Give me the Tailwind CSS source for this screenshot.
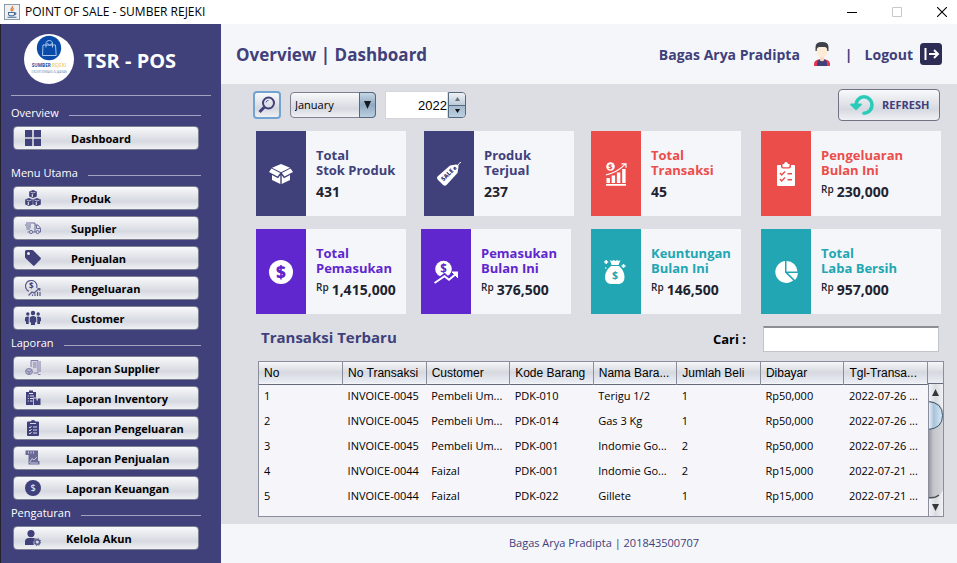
<!DOCTYPE html>
<html lang="id">
<head>
<meta charset="utf-8">
<meta name="viewport" content="width=device-width, initial-scale=1">
<title>POINT OF SALE - SUMBER REJEKI</title>
<script src="https://cdn.jsdelivr.net/npm/@tailwindcss/browser@4"></script>
</head>
<body class="flex min-h-screen flex-col bg-white font-['Open_Sans','Noto_Sans',sans-serif] text-xs text-black">

<!-- Window title bar -->
<div class="flex h-6 items-center bg-white pr-2.5 pl-1">
  <svg class="size-4" viewBox="0 0 16 16" aria-hidden="true">
    <rect x=".5" y=".5" width="15" height="15" fill="#eef1f4" stroke="#8d9aa8"/>
    <path d="M8.500 2c1 1.500-2 2.300-1.500 3.800.2.700.8 1 .8 1.700M10 4.500C8.500 5 8.300 6 9 7" fill="none" stroke="#e0752b" stroke-width="1.200"/>
    <path d="M4.500 8.500h6v1.500c0 1-.8 1.800-1.800 1.800H6.300c-1 0-1.800-.8-1.800-1.800zM10.500 9c2-.4 1.800 1.500-.2 1.700M3.500 13.300h9" fill="none" stroke="#4a6f96" stroke-width="1.100"/>
  </svg>
  <span class="ml-[5px] flex-1 text-xs leading-5">POINT OF SALE - SUMBER REJEKI</span>
  <div class="flex gap-[35px]">
    <button type="button" aria-label="Minimize" class="py-1.5"><svg class="size-2.5" viewBox="0 0 10 10"><path d="M0 5.500h10" stroke="#000"/></svg></button>
    <button type="button" aria-label="Maximize" disabled class="py-1.5"><svg class="size-2.5" viewBox="0 0 10 10"><path d="M.5.5h9v9h-9z" fill="none" stroke="#c8c8c8"/></svg></button>
    <button type="button" aria-label="Close" class="py-1.5"><svg class="size-2.5" viewBox="0 0 10 10"><path d="M0 0l10 10M10 0L0 10" stroke="#000" stroke-width="1.100"/></svg></button>
  </div>
</div>

<div class="flex flex-1">
  <!-- Sidebar -->
  <nav class="w-[221px] shrink-0 border-l border-[#26232e] bg-[#40407a] pt-2.5 text-white">
    <div class="flex items-center pl-[23px]">
      <svg class="size-[50px]" viewBox="0 0 50 50" aria-hidden="true">
        <circle cx="25" cy="25" r="25" fill="#fff"/>
        <circle cx="25" cy="14" r="12.200" fill="#0a4aa8"/>
        <path d="M19 11h12.500l.7 10.500H18.500zM22 13.500V9.500c0-4 6.500-4 6.500 0v4M23.500 9c1 3 3.500 3 4.500 0" fill="none" stroke="#a9c9ef" stroke-width="1"/>
        <text x="25" y="33" text-anchor="middle" font-family="Open Sans" font-weight="700" font-size="4.600" fill="#1c4f9e">SUMBER <tspan fill="#f3d77a">REJEKI</tspan></text>
        <text x="25" y="39" text-anchor="middle" font-family="Open Sans" font-size="2.600" fill="#6c8db3">GROSIR SEMBAKO &amp; JAJANAN</text>
      </svg>
      <span class="ml-2.5 pt-1 text-xl leading-6 font-bold">TSR - POS</span>
    </div>
    <hr class="mt-[11px] mr-2.5 ml-2.5 border-[#a3a3c0]">

    <section class="mt-[7px]">
      <div class="mr-5 ml-2.5 flex h-5 items-center gap-2.5"><h2 class="text-[11px]">Overview</h2><span class="mt-1 h-px flex-1 bg-[#a3a3c0]"></span></div>
      <div class="mt-[3px] mr-[22px] ml-3 flex flex-col gap-1.5">
        <button type="button" class="flex h-6 items-center rounded border border-[#7d8190] bg-linear-to-b from-[#f8f9fb] via-[#d6d9e0] via-65% to-[#eff1f5] pl-[11px] text-left text-[11px] font-bold text-black"><svg class="mr-[30px] size-4" viewBox="0 0 16 16" fill="#40407a"><path d="M0 0h7.200v7.200H0zM8.800 0H16v7.200H8.800zM0 8.800h7.200V16H0zM8.800 8.800H16V16H8.800z"/></svg><span class="pt-0.5">Dashboard</span></button>
      </div>
    </section>

    <section class="mt-[13px]">
      <div class="mr-5 ml-2.5 flex h-5 items-center gap-2.5"><h2 class="text-[11px]">Menu Utama</h2><span class="mt-1 h-px flex-1 bg-[#a3a3c0]"></span></div>
      <div class="mt-[3px] mr-[22px] ml-3 flex flex-col gap-1.5">
        <button type="button" class="flex h-6 items-center rounded border border-[#7d8190] bg-linear-to-b from-[#f8f9fb] via-[#d6d9e0] via-65% to-[#eff1f5] pl-[11px] text-left text-[11px] font-bold text-black"><svg class="mr-[30px] size-4" viewBox="0 0 16 16"><g fill="#40407a"><path d="M8 0l3.800 1.500v5L8 8 4.200 6.500v-5z"/><path d="M4 8l3.800 1.500v5L4 16 .2 14.500v-5z"/><path d="M12 8l3.800 1.500v5L12 16l-3.800-1.500v-5z"/></g><path d="M5.500 2L8 3l2.500-1M1.500 10L4 11l2.500-1M9.500 10l2.500 1 2.500-1" fill="none" stroke="#dcdfe6" stroke-width=".8"/><path d="M7.300 4v3M3.300 12v3M11.300 12v3" stroke="#dcdfe6" stroke-width="1.200"/></svg><span class="pt-0.5">Produk</span></button>
        <button type="button" class="flex h-6 items-center rounded border border-[#7d8190] bg-linear-to-b from-[#f8f9fb] via-[#d6d9e0] via-65% to-[#eff1f5] pl-[11px] text-left text-[11px] font-bold text-black"><svg class="mr-[30px] size-4" viewBox="0 0 16 16" fill="none" stroke="#6d6d9b" stroke-width="1"><path d="M1 3h9v9H7.500M4.500 12H2.500M10 5h3l2.500 3.200V12H14M11.200 12H10M11.500 5v3.500h4M0 5h6M1 7h5M1.500 9H5"/><circle cx="6" cy="12" r="1.600"/><circle cx="12.600" cy="12" r="1.600"/></svg><span class="pt-0.5">Supplier</span></button>
        <button type="button" class="flex h-6 items-center rounded border border-[#7d8190] bg-linear-to-b from-[#f8f9fb] via-[#d6d9e0] via-65% to-[#eff1f5] pl-[11px] text-left text-[11px] font-bold text-black"><svg class="mr-[30px] size-4" viewBox="0 0 16 16"><path fill="#40407a" fill-rule="evenodd" d="M1.500 0H7q.8 0 1.400.6l7 7q1 1 0 2l-5.600 5.700q-1 1-2 0L.6 8.300Q0 7.700 0 7V1.500Q0 0 1.500 0zM3.500 2a1.500 1.500 0 100 3 1.500 1.500 0 000-3z"/></svg><span class="pt-0.5">Penjualan</span></button>
        <button type="button" class="flex h-6 items-center rounded border border-[#7d8190] bg-linear-to-b from-[#f8f9fb] via-[#d6d9e0] via-65% to-[#eff1f5] pl-[11px] text-left text-[11px] font-bold text-black"><svg class="mr-[30px] size-4" viewBox="0 0 16 16" fill="none" stroke="#5a5a8d" stroke-width="1.200"><path d="M4 11.300A5.700 5.700 0 1111.600 8M3.500 15.500l3.500-3.500 2 1 5.500-4.500M12.500 8.500h2.300v2.300M7.500 16v-1.500M10 16v-2.500M12.500 16v-4M15 16v-4"/><text x="4.100" y="9" font-family="Open Sans" font-size="8" font-weight="700" fill="#40407a" stroke="none">$</text></svg><span class="pt-0.5">Pengeluaran</span></button>
        <button type="button" class="flex h-6 items-center rounded border border-[#7d8190] bg-linear-to-b from-[#f8f9fb] via-[#d6d9e0] via-65% to-[#eff1f5] pl-[11px] text-left text-[11px] font-bold text-black"><svg class="mr-[30px] size-4" viewBox="0 0 16 16" fill="#40407a"><circle cx="8" cy="3" r="2.200"/><circle cx="2.800" cy="4" r="1.700"/><circle cx="13.200" cy="4" r="1.700"/><path d="M4.700 8.500Q4.700 6 8 6t3.300 2.500V12l-1.300.500V15H6v-2.500L4.700 12zM0 8.500Q0 6.400 2.800 6.400q.8 0 1.400.300Q3.700 7.500 3.700 9v5H1V11.500L0 11zM16 8.500q0-2.100-2.800-2.100-.8 0-1.400.300.5.800.5 2.300v5H15V11.500l1-.5z"/></svg><span class="pt-0.5">Customer</span></button>
      </div>
    </section>

    <section class="mt-[3px]">
      <div class="mr-5 ml-2.5 flex h-5 items-center gap-2.5"><h2 class="text-[11px]">Laporan</h2><span class="mt-1 h-px flex-1 bg-[#a3a3c0]"></span></div>
      <div class="mt-[3px] mr-[22px] ml-3 flex flex-col gap-1.5">
        <button type="button" class="flex h-6 items-center rounded border border-[#7d8190] bg-linear-to-b from-[#f8f9fb] via-[#d6d9e0] via-65% to-[#eff1f5] pl-[11px] text-left text-[11px] font-bold text-black"><svg class="mr-[25px] size-4" viewBox="0 0 16 16" fill="none" stroke="#7f7fa8"><path fill="#d5d6e2" d="M6 7V.5h7V13H8.500"/><path d="M8 3h3.500M8 5h3.500M8 7h3.500M15 1v11M13 14.500h2.500"/><ellipse cx="4" cy="11.500" rx="3.500" ry="3" fill="#b4b5cc"/><path d="M1 10.500l3 1.500 3-1.500M4 12v2.500"/></svg><span class="pt-0.5">Laporan Supplier</span></button>
        <button type="button" class="flex h-6 items-center rounded border border-[#7d8190] bg-linear-to-b from-[#f8f9fb] via-[#d6d9e0] via-65% to-[#eff1f5] pl-[11px] text-left text-[11px] font-bold text-black"><svg class="mr-[25px] size-4" viewBox="0 0 16 16"><path fill="#40407a" d="M1 2h3V.5h4V2h3v5.500H8.200V15H1z"/><path d="M4 3.500h4M2.800 6h1M5 6h4M2.800 8.500h1M5 8.500h3M2.800 11h1M5 11h2.500" stroke="#e3e5ec" stroke-width="1" fill="none"/><path fill="#40407a" d="M9 8.500h2.500v2h1.300v-2H15.500V15H9z"/></svg><span class="pt-0.5">Laporan Inventory</span></button>
        <button type="button" class="flex h-6 items-center rounded border border-[#7d8190] bg-linear-to-b from-[#f8f9fb] via-[#d6d9e0] via-65% to-[#eff1f5] pl-[11px] text-left text-[11px] font-bold text-black"><svg class="mr-[25px] size-4" viewBox="0 0 16 16"><path fill="#40407a" d="M3 1.500h2.500Q6 0 8 0t2.500 1.500H13q1 0 1 1V15q0 1-1 1H3q-1 0-1-1V2.500q0-1 1-1z"/><path d="M5 3.500h6M4 7l1 1 1.500-2M8 7h4M4 10l1 1 1.500-2M8 10h4M4 13l1 1 1.500-2M8 13h4" fill="none" stroke="#e3e5ec" stroke-width=".9"/></svg><span class="pt-0.5">Laporan Pengeluaran</span></button>
        <button type="button" class="flex h-6 items-center rounded border border-[#7d8190] bg-linear-to-b from-[#f8f9fb] via-[#d6d9e0] via-65% to-[#eff1f5] pl-[11px] text-left text-[11px] font-bold text-black"><svg class="mr-[25px] size-4" viewBox="0 0 16 16"><path fill="#6a6a98" d="M.5.5H13v10.500h1.500v3.500H3.500V5H.5z"/><path d="M3.500 1.500v2M6 1.500v2M8.500 1.500v2M4.500 12.500l2.500-4 2 1.500 3-3M5 13h8" fill="none" stroke="#dfe1ea" stroke-width=".8"/></svg><span class="pt-0.5">Laporan Penjualan</span></button>
        <button type="button" class="flex h-6 items-center rounded border border-[#7d8190] bg-linear-to-b from-[#f8f9fb] via-[#d6d9e0] via-65% to-[#eff1f5] pl-[11px] text-left text-[11px] font-bold text-black"><svg class="mr-[25px] size-4" viewBox="0 0 16 16"><circle cx="8" cy="8" r="8" fill="#40407a"/><text x="8" y="11.300" text-anchor="middle" font-family="Open Sans" font-size="9" font-weight="600" fill="#dfe1ea">$</text></svg><span class="pt-0.5">Laporan Keuangan</span></button>
      </div>
    </section>

    <section class="mt-[3px]">
      <div class="mr-5 ml-2.5 flex h-5 items-center gap-2.5"><h2 class="text-[11px]">Pengaturan</h2><span class="mt-1 h-px flex-1 bg-[#a3a3c0]"></span></div>
      <div class="mt-[3px] mr-[22px] ml-3 flex flex-col gap-1.5">
        <button type="button" class="flex h-6 items-center rounded border border-[#7d8190] bg-linear-to-b from-[#f8f9fb] via-[#d6d9e0] via-65% to-[#eff1f5] pl-[11px] text-left text-[11px] font-bold text-black"><svg class="mr-[25px] size-4" viewBox="0 0 16 16"><path fill="#40407a" d="M6 0a3.600 3.600 0 110 7.200A3.600 3.600 0 016 0zM0 15v-3.500Q0 8 4 8h4q1.500 0 2.500.8Q7.500 11 8.800 15z"/><circle cx="12.300" cy="12" r="2.300" fill="none" stroke="#55558a" stroke-width="1.500"/><circle cx="12.300" cy="12" r="3.500" fill="none" stroke="#55558a" stroke-width="1" stroke-dasharray="1.400 1.350"/></svg><span class="pt-0.5">Kelola Akun</span></button>
      </div>
    </section>
  </nav>

  <div class="flex min-w-0 flex-1 flex-col">
    <header class="flex h-15 items-center bg-[#f5f6fa] px-[15px] font-bold text-[#40407a]">
      <h1 class="flex-1 pt-0.5 text-[17px] leading-6">Overview | Dashboard</h1>
      <span class="pt-0.5 text-sm">Bagas Arya Pradipta</span>
      <svg class="ml-2.5 size-6" viewBox="0 0 24 24" aria-hidden="true">
        <path fill="#e8384f" d="M4 24v-2q0-4 5-4.500h6q5 .5 5 4.500v2z"/><path fill="#40407a" d="M7 24v-3q0-2.500 2-3.500h6q2 1 2 3.500v3z"/><path fill="#f6d9bb" d="M10 14h4v4.500q-2 1.500-4 0z"/><path fill="#fdebd5" d="M6.500 6q0-2.500 5.500-2.500T17.500 6v3.500Q16.800 15.500 12 15.800 7.200 15.500 6.500 9.500z"/><path fill="#3e4248" d="M5.500 9V5Q5.500 0 12 0t6.500 5v4h-1.300Q17.500 5.500 15 5H9Q6.500 5.500 6.800 9z"/>
      </svg>
      <span class="ml-[11px] pt-0.5 text-sm">|</span>
      <a href="#" class="ml-3 flex items-center gap-[7px] text-sm"><span class="pt-0.5">Logout</span>
        <svg class="size-[22px]" viewBox="0 0 22 22" aria-hidden="true"><rect width="22" height="22" rx="3.500" fill="#2c2c54"/><path d="M5.500 5v12M9 11h8.500M14 7l4 4-4 4" fill="none" stroke="#fff" stroke-width="2"/></svg>
      </a>
    </header>

    <main class="flex-1 bg-[#dddee3] pr-4 pb-[7px] pl-8">
      <div class="flex h-[42px] items-center pr-px">
        <button type="button" aria-label="Cari periode" class="flex size-7 items-center justify-center rounded border-2 border-[#73a4d1] bg-linear-to-b from-[#f8f9fb] via-[#d6d9e0] via-65% to-[#eff1f5]">
          <svg class="size-[18px]" viewBox="0 0 18 18" fill="none" stroke="#40407a"><circle cx="10.500" cy="7" r="5.500" stroke-width="2"/><path d="M6.500 11l-5 5" stroke-width="3"/><path d="M8 6.500Q8.500 4.300 10.500 4.300" stroke-width=".8"/></svg>
        </button>
        <div class="relative ml-[9px] h-[26px] w-[86px]">
          <select aria-label="Bulan" class="h-full w-full appearance-none rounded border border-[#7d8190] bg-linear-to-b from-[#f8f9fb] via-[#d6d9e0] via-65% to-[#eff1f5] pl-1 text-[11px]"><option>January</option></select>
          <span class="pointer-events-none absolute inset-y-0 right-0 flex w-[17px] items-center justify-center rounded-r border border-[#54687e] bg-linear-to-b from-[#c6d6e4] via-[#8ea9c2] to-[#bdd0e2]"><svg width="7" height="8" viewBox="0 0 7 8"><path d="M0 0h7L3.500 8z" fill="#15191f"/></svg></span>
        </div>
        <input aria-label="Tahun" type="text" inputmode="numeric" value="2022" class="ml-[9px] h-7 w-[62px] border border-r-0 border-[#d4d6dc] bg-white text-right font-['Liberation_Sans',sans-serif] text-[13px]">
        <div class="ml-px flex h-[26px] w-[18px] flex-col overflow-hidden rounded-r border border-[#54687e]">
          <button type="button" aria-label="Tambah tahun" class="flex flex-1 items-center justify-center border-b border-[#54687e] bg-linear-to-b from-[#eef1f5] to-[#bccbd9]"><svg width="5" height="4" viewBox="0 0 5 4"><path d="M0 4h5L2.500 0z" fill="#6b7075"/></svg></button>
          <button type="button" aria-label="Kurangi tahun" class="flex flex-1 items-center justify-center bg-linear-to-b from-[#a3b9cd] to-[#bdd0e2]"><svg width="5" height="4" viewBox="0 0 5 4"><path d="M0 0h5L2.500 4z" fill="#111"/></svg></button>
        </div>
        <button type="button" class="ml-auto flex h-8 w-[102px] items-center rounded border border-[#6f7383] bg-linear-to-b from-[#f8f9fb] via-[#d6d9e0] via-65% to-[#eff1f5] pl-[11px] text-[11px] font-bold text-[#40407a]">
          <svg class="mr-2 h-5 w-6 shrink-0" viewBox="0 0 24 20" aria-hidden="true"><path d="M6 10A8 8.200 0 1114 18.200" fill="none" stroke="#2bcbba" stroke-width="3.600" stroke-linecap="round"/><path d="M1.300 9.500h9.500L6 14z" fill="#2bcbba" stroke="#2bcbba" stroke-width="2.200" stroke-linejoin="round"/></svg>REFRESH
        </button>
      </div>

      <!-- Summary cards -->
      <div class="mt-[5px] ml-[3px] flex h-[85px] leading-[15px] font-bold text-[#1e2330]">
        <article class="flex flex-[150] bg-[#f5f6fa]">
          <div class="flex w-[50px] shrink-0 items-center justify-center bg-[#40407a]"><svg class="size-6" viewBox="0 0 24 24" fill="#fff"><path d="M12 2l9 3.700-9 4.600-9-4.600zM2.500 6.500l8.700 4.500-2.700 3.500L0 10zM21.500 6.500L12.800 11l2.700 3.500L24 10zM3 13l6 3.300 2.300-3V22L3 18zM21 13l-6 3.300-2.300-3V22l8.300-4z"/></svg></div>
          <div class="pt-[17px] pl-2.5 whitespace-nowrap"><h3 class="text-[13px] text-[#40407a]">Total<br>Stok Produk</h3><p class="mt-1.5 text-sm leading-[15px]">431</p></div>
        </article>
        <article class="ml-[18px] flex flex-[150] bg-[#f5f6fa]">
          <div class="flex w-[50px] shrink-0 items-center justify-center bg-[#40407a]"><svg class="size-6" viewBox="0 0 24 24"><path fill="#fff" fill-rule="evenodd" d="M13 3.500l6-1q2.500 0 2.500 2.500l-1 6L9.500 23q-1.700 1.500-3.400 0L.8 17.700q-1.500-1.700 0-3.400zM18 4.700a1.600 1.600 0 100 3.200 1.600 1.600 0 000-3.200z"/><path d="M18.500 6l2-1.500q.5-3 3.500-4.500" fill="none" stroke="#fff"/><text x="6.500" y="19.500" transform="rotate(-45 6.500 19.500)" font-family="Open Sans" font-size="6" font-weight="800" fill="#40407a">SALE</text></svg></div>
          <div class="pt-[17px] pl-2.5 whitespace-nowrap"><h3 class="text-[13px] text-[#40407a]">Produk<br>Terjual</h3><p class="mt-1.5 text-sm leading-[15px]">237</p></div>
        </article>
        <article class="ml-[17px] flex flex-[150] bg-[#f5f6fa]">
          <div class="flex w-[50px] shrink-0 items-center justify-center bg-[#eb4d4b]"><svg class="size-6" viewBox="0 0 24 24"><circle cx="6.500" cy="4.500" r="4.300" fill="#fff"/><text x="6.500" y="7.300" text-anchor="middle" font-family="Open Sans" font-size="7.500" font-weight="700" fill="#eb4d4b">$</text><path d="M2.500 16h3.400v5H2.500zM7.700 13.500h3.400V21H7.700zM12.900 10.500h3.400V21h-3.400zM18.200 7h3.400v14h-3.400zM2 22h20v1.800H2z" fill="#fff"/><path d="M2 12.800q11-2.300 19-10.500M17.500 1.800H22v4" fill="none" stroke="#fff" stroke-width="1.200"/></svg></div>
          <div class="pt-[17px] pl-2.5 whitespace-nowrap"><h3 class="text-[13px] text-[#eb4d4b]">Total<br>Transaksi</h3><p class="mt-1.5 text-sm leading-[15px]">45</p></div>
        </article>
        <article class="ml-5 flex flex-[180] bg-[#f5f6fa]">
          <div class="flex w-[50px] shrink-0 items-center justify-center bg-[#eb4d4b]"><svg class="size-6" viewBox="0 0 24 24"><path fill="#fff" d="M4 3h3v1.500q0 2 2 2h6q2 0 2-2V3h3q1 0 1 1v19q0 1-1 1H4q-1 0-1-1V4q0-1 1-1zM8.500 2H10q.4-2 2-2t2 2h1.500v2.500q0 .8-.8.800H9.300q-.8 0-.8-.8z"/><path d="M6 11l1.700 2 3.300-3.500M13.500 11.700h4.500M6 17l1.700 2 3.300-3.500M13.500 17.700h4.500" fill="none" stroke="#eb4d4b" stroke-width="1.400"/></svg></div>
          <div class="pt-[17px] pl-2.5 whitespace-nowrap"><h3 class="text-[13px] text-[#eb4d4b]">Pengeluaran<br>Bulan Ini</h3><p class="mt-1.5 flex gap-[3px] text-sm leading-[15px]"><span class="text-[10px] leading-[11px] font-semibold">Rp</span>230,000</p></div>
        </article>
      </div>
      <div class="mt-[13px] ml-[3px] flex h-[85px] leading-[15px] font-bold text-[#1e2330]">
        <article class="flex flex-[150] bg-[#f5f6fa]">
          <div class="flex w-[50px] shrink-0 items-center justify-center bg-[#5f27cd]"><svg class="size-6" viewBox="0 0 24 24"><circle cx="12" cy="12" r="12" fill="#fff"/><text x="12" y="18.200" text-anchor="middle" font-family="Open Sans" font-size="17" font-weight="800" fill="#5f27cd">$</text></svg></div>
          <div class="pt-[17px] pl-2.5 whitespace-nowrap"><h3 class="text-[13px] text-[#5f27cd]">Total<br>Pemasukan</h3><p class="mt-1.5 flex gap-[3px] text-sm leading-[15px]"><span class="text-[10px] leading-[11px] font-semibold">Rp</span>1,415,000</p></div>
        </article>
        <article class="ml-[15px] flex flex-[150] bg-[#f5f6fa]">
          <div class="flex w-[50px] shrink-0 items-center justify-center bg-[#5f27cd]"><svg class="size-6" viewBox="0 0 24 24"><circle cx="9.500" cy="9" r="8.300" fill="#fff"/><text x="9.500" y="13" text-anchor="middle" font-family="Open Sans" font-size="11.500" font-weight="700" fill="#5f27cd">$</text><path d="M0 24l10.500-8 4.500 4 7-6" fill="none" stroke="#5f27cd" stroke-width="5"/><path d="M.5 23l10-6.800 4.500 3.600 6-5" fill="none" stroke="#fff" stroke-width="2"/><path d="M18 12h6v6z" fill="#fff" stroke="#fff"/></svg></div>
          <div class="pt-[17px] pl-2.5 whitespace-nowrap"><h3 class="text-[13px] text-[#5f27cd]">Pemasukan<br>Bulan Ini</h3><p class="mt-1.5 flex gap-[3px] text-sm leading-[15px]"><span class="text-[10px] leading-[11px] font-semibold">Rp</span>376,500</p></div>
        </article>
        <article class="ml-5 flex flex-[150] bg-[#f5f6fa]">
          <div class="flex w-[50px] shrink-0 items-center justify-center bg-[#22a6b3]"><svg class="size-6" viewBox="0 0 24 24" fill="#fff"><path d="M6 0l2 1 1.700-1 1.800 1L13 0l1.700 1L16.500 0l-2 5h-7zM7 6h8q5.500 5 5.500 11T15 24H6.500Q1 23 1 17T7 6z"/><path d="M2.200 0v4M.2 2h4M19.500 4v4M17.500 6h4" stroke="#fff" stroke-width="1.500"/><circle cx="1.800" cy="8" r=".8"/><text x="11" y="19" text-anchor="middle" font-family="Open Sans" font-size="10.500" font-weight="700" fill="#22a6b3">$</text></svg></div>
          <div class="pt-[17px] pl-2.5 whitespace-nowrap"><h3 class="text-[13px] text-[#22a6b3]">Keuntungan<br>Bulan Ini</h3><p class="mt-1.5 flex gap-[3px] text-sm leading-[15px]"><span class="text-[10px] leading-[11px] font-semibold">Rp</span>146,500</p></div>
        </article>
        <article class="ml-5 flex flex-[180] bg-[#f5f6fa]">
          <div class="flex w-[50px] shrink-0 items-center justify-center bg-[#22a6b3]"><svg class="size-6" viewBox="0 0 24 24" fill="#fff"><path d="M11 1v11.500l8.200 8A11 11 0 1111 1zM12.500 1A11 11 0 0123.500 11.500h-11zM14 13h10q-.2 4-3 7z"/></svg></div>
          <div class="pt-[17px] pl-2.5 whitespace-nowrap"><h3 class="text-[13px] text-[#22a6b3]">Total<br>Laba Bersih</h3><p class="mt-1.5 flex gap-[3px] text-sm leading-[15px]"><span class="text-[10px] leading-[11px] font-semibold">Rp</span>957,000</p></div>
        </article>
      </div>

      <div class="mt-3 flex h-[26px] items-center pr-0.5 pl-2">
        <h2 class="flex-1 pb-1 text-[15px] leading-5 font-bold text-[#40407a]">Transaksi Terbaru</h2>
        <label for="cari" class="mr-[17px] pt-0.5 text-[13px] font-bold">Cari :</label>
        <input id="cari" type="text" class="h-[26px] w-44 border border-t-2 border-[#c3c4c9] border-t-[#8d8e94] bg-white px-1.5">
      </div>

      <!-- Latest transactions -->
      <div class="mt-[9px] mr-[-3px] ml-[5px] flex h-[156px] border border-[#8a8d9b] bg-[#f5f5fa]">
        <div class="min-w-0 flex-1">
          <table class="w-full table-fixed border-collapse text-left whitespace-nowrap">
            <thead class="font-['Liberation_Sans',sans-serif] text-[12px]">
              <tr class="h-[22px] border-b border-[#666a78] bg-linear-to-b from-[#f6f7f9] via-[#d6d9df] to-[#eceef5] [&>th]:border-r [&>th]:border-[#8a8d9b] [&>th]:pl-[5px] [&>th]:font-normal">
                <th>No</th><th>No Transaksi</th><th>Customer</th><th>Kode Barang</th><th>Nama Bara...</th><th>Jumlah Beli</th><th>Dibayar</th><th>Tgl-Transa...</th>
              </tr>
            </thead>
            <tbody class="text-[11px] [&_td]:pl-[5px] [&>tr]:h-[25px]">
              <tr><td>1</td><td>INVOICE-0045</td><td>Pembeli Um...</td><td>PDK-010</td><td>Terigu 1/2</td><td>1</td><td>Rp50,000</td><td>2022-07-26 ...</td></tr>
              <tr><td>2</td><td>INVOICE-0045</td><td>Pembeli Um...</td><td>PDK-014</td><td>Gas 3 Kg</td><td>1</td><td>Rp50,000</td><td>2022-07-26 ...</td></tr>
              <tr><td>3</td><td>INVOICE-0045</td><td>Pembeli Um...</td><td>PDK-001</td><td>Indomie Go...</td><td>2</td><td>Rp50,000</td><td>2022-07-26 ...</td></tr>
              <tr><td>4</td><td>INVOICE-0044</td><td>Faizal</td><td>PDK-001</td><td>Indomie Go...</td><td>2</td><td>Rp15,000</td><td>2022-07-21 ...</td></tr>
              <tr><td>5</td><td>INVOICE-0044</td><td>Faizal</td><td>PDK-022</td><td>Gillete</td><td>1</td><td>Rp15,000</td><td>2022-07-21 ...</td></tr>
            </tbody>
          </table>
        </div>
        <div class="flex w-[15px] flex-col" aria-hidden="true">
          <div class="h-[22px] border-b border-[#666a78] bg-linear-to-b from-[#f6f7f9] via-[#d6d9df] to-[#eceef5]"></div>
          <svg class="w-full flex-1" viewBox="0 0 15 132" preserveAspectRatio="none">
            <defs>
              <linearGradient id="track"><stop offset="0" stop-color="#8d8f94"/><stop offset=".35" stop-color="#c3c5ca"/><stop offset="1" stop-color="#d3d5da"/></linearGradient>
              <linearGradient id="btn"><stop offset="0" stop-color="#f5f6f8"/><stop offset=".5" stop-color="#d9dce1"/><stop offset="1" stop-color="#f1f2f5"/></linearGradient>
              <linearGradient id="thumb"><stop offset="0" stop-color="#f4f8fc"/><stop offset=".4" stop-color="#a9c3da"/><stop offset="1" stop-color="#d9ebf8"/></linearGradient>
            </defs>
            <rect width="15" height="132" fill="url(#track)"/>
            <path d="M0 0h15v26Q12 17 0 17z" fill="url(#btn)"/>
            <path d="M0 114q11 1 15-8v26H0z" fill="url(#btn)"/>
            <path d="M0 113.500q7 1 11-2.500" fill="none" stroke="#4d5055" stroke-width="1.500"/>
            <path d="M0 17.500q14.500 1 14.500 14T0 45.500z" fill="url(#thumb)" stroke="#3d5468"/>
            <path d="M.5 0v132" stroke="#8a8d9b"/>
            <path d="M4 12h7L7.500 5zM4 120h7l-3.500 7z" fill="#33363b"/>
          </svg>
        </div>
      </div>
    </main>

    <footer class="flex h-[39px] items-center justify-center bg-[#f5f6fa] pl-[30px] text-[11px] text-[#40407a]">Bagas Arya Pradipta | 201843500707</footer>
  </div>
</div>
</body>
</html>
